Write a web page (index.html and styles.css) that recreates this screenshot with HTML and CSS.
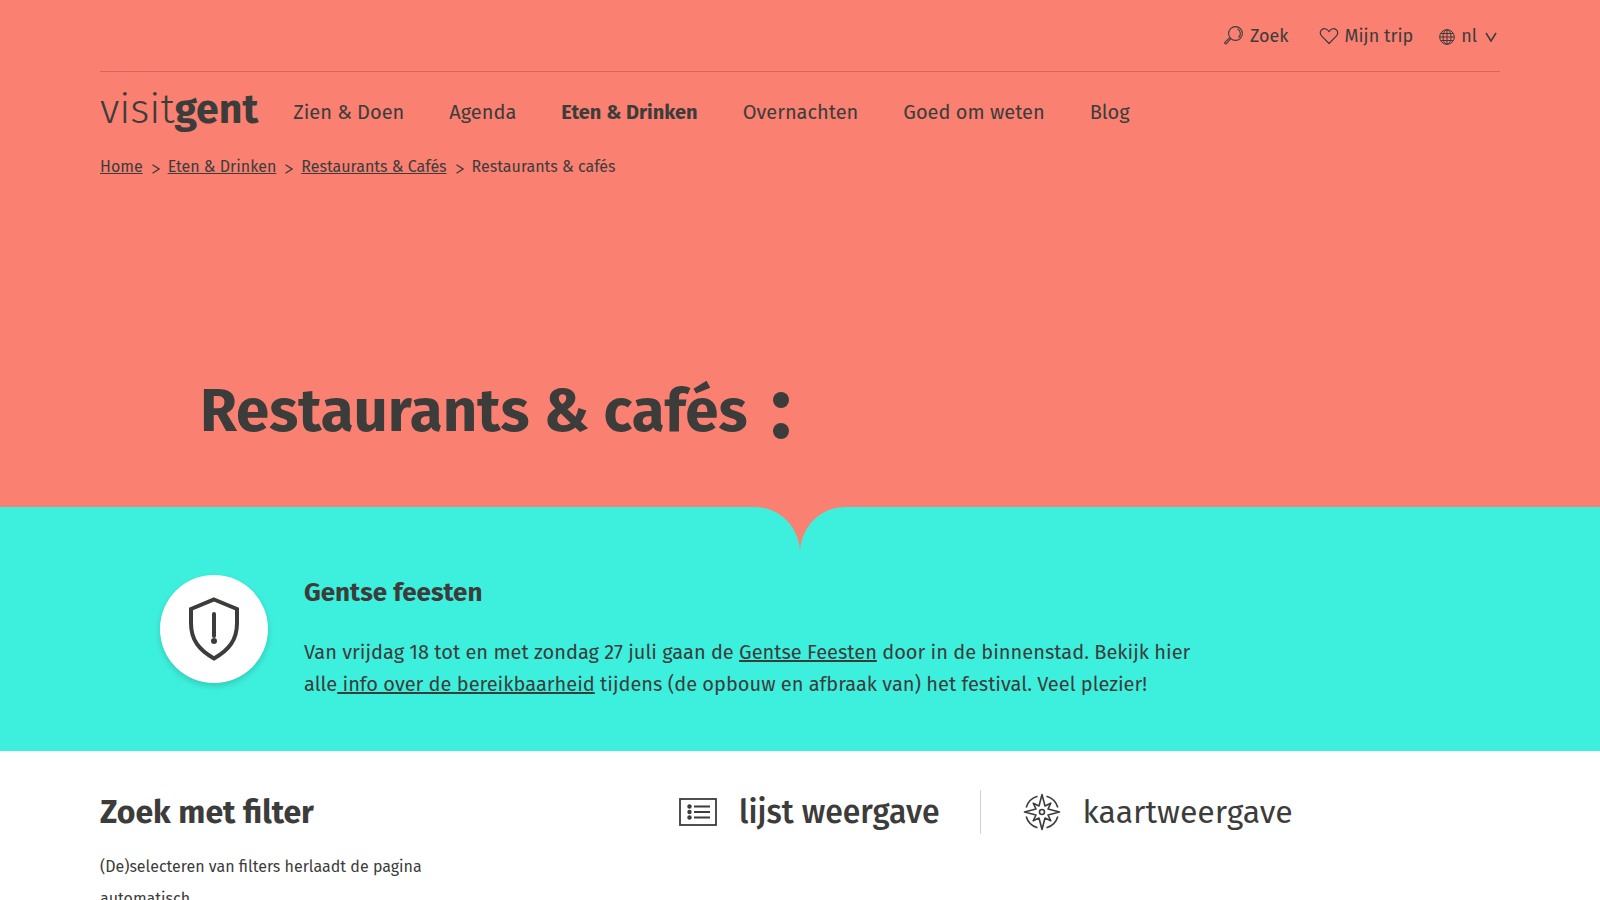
FILE: index.html
```html
<!DOCTYPE html>
<html lang="nl">

<head>
    <meta charset="UTF-8">
    <meta name="viewport" content="width=device-width, initial-scale=1">
    <title>Restaurants &amp; cafés | Visit Gent</title>
    <link rel="stylesheet" href="styles.css">
</head>

<body>
    <header class="hero">
        <div class="topbar">
            <a class="tool search" href="#zoek">
                <svg width="20" height="20" viewBox="0 0 20 20" fill="none" stroke="currentColor" stroke-width="1.100">
                    <circle cx="11.5" cy="7.500" r="6.900"></circle>
                    <path d="M13.5 2.700a5.500 5.500 0 0 1 1 9M6.800 12.600l-4.400 5c-.8.900-2.300-.4-1.500-1.300L5.800 11.600"></path>
                </svg>
                Zoek
            </a>
            <a class="tool" href="#trip">
                <svg width="20" height="20" viewBox="0 0 20 20" fill="none" stroke="currentColor" stroke-width="1.200" stroke-linejoin="round">
                    <path d="M10 17.500L2.500 9.800C-.5 6 3 1.500 7 3c1.500.6 2.500 1.700 3 2.700.5-1 1.500-2.100 3-2.700 4-1.500 7.500 3 4.500 6.800z"></path>
                </svg>
                Mijn trip
            </a>
            <button class="tool lang" type="button" aria-label="Taal: nl">
                <svg width="16" height="16" viewBox="0 0 16 16" fill="none" stroke="currentColor" stroke-width="1">
                    <circle cx="8" cy="8" r="7.300"></circle>
                    <ellipse cx="8" cy="8" rx="4" ry="7.300"></ellipse>
                    <path d="M8 .7v14.600M.7 8h14.600M2 4.500h12M2 11.500h12"></path>
                </svg>
                nl
                <svg class="caret" width="12" height="12" viewBox="0 0 12 12" fill="none" stroke="currentColor" stroke-width="1.500">
                    <path d="M1 2l5 8 5-8"></path>
                </svg>
            </button>
        </div>

        <div class="mainbar">
            <a class="logo" href="#home">visit<b>gent</b></a>
            <nav class="menu">
                <a href="#zien">Zien &amp; Doen</a>
                <a href="#agenda">Agenda</a>
                <a class="active" href="#eten">Eten &amp; Drinken</a>
                <a href="#overnachten">Overnachten</a>
                <a href="#goed">Goed om weten</a>
                <a href="#blog">Blog</a>
            </nav>
        </div>

        <nav class="breadcrumb" aria-label="Kruimelpad">
            <a href="#home">Home</a>
            <svg width="9" height="10" viewBox="0 0 9 10" fill="none" stroke="currentColor" stroke-width="1.300"><path d="M1.500.8L8 5 1.500 9.200"></path></svg>
            <a href="#eten">Eten &amp; Drinken</a>
            <svg width="9" height="10" viewBox="0 0 9 10" fill="none" stroke="currentColor" stroke-width="1.300"><path d="M1.500.8L8 5 1.500 9.200"></path></svg>
            <a href="#restaurants">Restaurants &amp; Cafés</a>
            <svg width="9" height="10" viewBox="0 0 9 10" fill="none" stroke="currentColor" stroke-width="1.300"><path d="M1.500.8L8 5 1.500 9.200"></path></svg>
            <span>Restaurants &amp; cafés</span>
        </nav>

        <h1 class="title">
            Restaurants &amp; cafés
            <svg width="18" height="48" viewBox="0 0 18 48" fill="currentColor" aria-hidden="true">
                <circle cx="9" cy="8" r="8"></circle>
                <circle cx="9" cy="39" r="8"></circle>
            </svg>
        </h1>
    </header>

    <section class="notice">
        <svg class="notch" width="90" height="46" viewBox="0 0 90 46" fill="currentColor" aria-hidden="true">
            <path d="M0 0A45 46 0 0 1 45 46 45 46 0 0 1 90 0z"></path>
        </svg>
        <div class="badge">
            <svg width="52" height="64" viewBox="0 0 52 64" fill="none" stroke="currentColor" stroke-width="4">
                <path d="M26 2.500L49 12v14c0 17-8 27-23 35.500C11 53 3 43 3 26V12z"></path>
                <path d="M26 17v22" stroke-linecap="round"></path>
                <circle cx="26" cy="44" r="3" fill="currentColor" stroke="none"></circle>
            </svg>
        </div>
        <div class="notice-text">
            <h2>Gentse feesten</h2>
            <p>Van vrijdag 18 tot en met zondag 27 juli gaan de <a href="#feesten">Gentse Feesten</a> door in de binnenstad. Bekijk hier alle<a href="#info"> info over de bereikbaarheid</a> tijdens (de opbouw en afbraak van) het festival. Veel plezier!</p>
        </div>
    </section>

    <main class="results">
        <aside class="filter">
            <h2>Zoek met filter</h2>
            <p>(De)selecteren van filters herlaadt de pagina automatisch.</p>
        </aside>
        <nav class="views" aria-label="Weergave">
            <a class="view active" href="#lijst">
                <svg width="38" height="28" viewBox="0 0 38 28" fill="none" stroke="currentColor" stroke-width="1.800">
                    <rect x="1" y="1" width="36" height="26"></rect>
                    <path d="M15 8.500h16M15 14h16M15 19.500h16"></path>
                    <g fill="currentColor" stroke="none">
                        <circle cx="10.500" cy="8.500" r="2.200"></circle>
                        <circle cx="10.500" cy="14" r="2.200"></circle>
                        <circle cx="10.500" cy="19.500" r="2.200"></circle>
                    </g>
                </svg>
                lijst weergave
            </a>
            <a class="view" href="#kaart">
                <svg width="38" height="38" viewBox="0 0 38 38" fill="none" stroke="currentColor" stroke-width="1.600" stroke-linejoin="round">
                    <path d="M19 1.500l3 11.500 5.800-2.800L25 16l11.500 3L25 22l2.800 5.800L22 25l-3 11.500L16 25l-5.800 2.800L13 22 1.500 19 13 16l-2.800-5.800L16 13z"></path>
                    <circle cx="19" cy="19" r="2.500"></circle>
                    <path d="M23.500 3.200A16.500 16.500 0 0 1 34.800 14.500M34.800 23.500A16.500 16.500 0 0 1 23.500 34.800M14.500 34.800A16.500 16.500 0 0 1 3.200 23.500M3.200 14.500A16.500 16.500 0 0 1 14.500 3.200"></path>
                </svg>
                kaartweergave
            </a>
        </nav>
    </main>
</body>

</html>
```
FILE: styles.css
```css
body {
    margin: 0;
    font-family: "Fira Sans", "Noto Sans", sans-serif;
    font-size: 16px;
    line-height: 32px;
    color: #3c3c3b;
    background-color: #fff;
}

a {
    color: inherit;
}

h1,
h2,
p {
    margin: 0;
}

svg {
    flex-shrink: 0;
}

.hero {
    padding: 0 100px 56px;
    background-color: #fa8072;
}

.topbar {
    display: flex;
    justify-content: flex-end;
    align-items: center;
    gap: 26px;
    padding-top: 1px;
    height: 70px;
    border-bottom: 1px solid #dc655f;
}

.tool {
    display: flex;
    align-items: center;
    gap: 6px;
    font-size: 18px;
    text-decoration: none;
}

.search {
    margin-right: 4px;
}

.lang {
    padding: 0 3px 0 0;
    border: 0;
    background: none;
    font-family: inherit;
    line-height: inherit;
    color: inherit;
    cursor: pointer;
}

.lang svg {
    margin-top: 2px;
}

.caret {
    margin-left: 2px;
}

.mainbar {
    display: flex;
    align-items: center;
    gap: 35px;
    height: 79px;
}

.logo {
    padding-bottom: 4px;
    font-size: 41px;
    font-weight: 300;
    text-decoration: none;
}

.logo b {
    font-weight: 700;
}

.menu {
    display: flex;
    gap: 45px;
    font-size: 20px;
}

.menu a {
    text-decoration: none;
}

.menu .active {
    font-weight: 700;
}

.breadcrumb {
    display: flex;
    align-items: center;
    gap: 8px;
}

.breadcrumb svg {
    margin-top: 3px;
}

.title {
    display: flex;
    align-items: center;
    gap: 25px;
    padding: 188px 100px 0;
    font-size: 60px;
    font-weight: 700;
    line-height: 80px;
}

.title svg {
    margin-top: 10px;
}

.notice {
    position: relative;
    display: flex;
    gap: 36px;
    padding: 68px 160px 51px;
    background-color: #3df0dd;
}

.notch {
    position: absolute;
    top: 0;
    left: 50%;
    transform: translateX(-50%);
    color: #fa8072;
}

.badge {
    display: flex;
    justify-content: center;
    align-items: center;
    flex-shrink: 0;
    width: 108px;
    height: 108px;
    border-radius: 50%;
    background-color: #fff;
    box-shadow: 0 3px 6px rgba(0, 0, 0, .16);
}

.notice-text {
    max-width: 900px;
}

.notice-text h2 {
    margin-bottom: 25px;
    font-size: 26px;
    line-height: 36px;
}

.notice-text p {
    font-size: 20px;
}

.results {
    display: grid;
    grid-template-columns: 350px 1fr;
    column-gap: 229px;
    padding: 39px 100px;
}

.filter h2 {
    margin-bottom: 17px;
    font-size: 32px;
    line-height: 44px;
}

.views {
    display: flex;
    align-items: center;
    align-self: start;
}

.view {
    display: flex;
    align-items: center;
    gap: 22px;
    font-size: 32px;
    line-height: 44px;
    text-decoration: none;
    white-space: nowrap;
}

.view.active {
    padding-right: 40px;
    border-right: 1px solid #d2d2d2;
    font-weight: 500;
}

.view + .view {
    padding-left: 42px;
}
```
